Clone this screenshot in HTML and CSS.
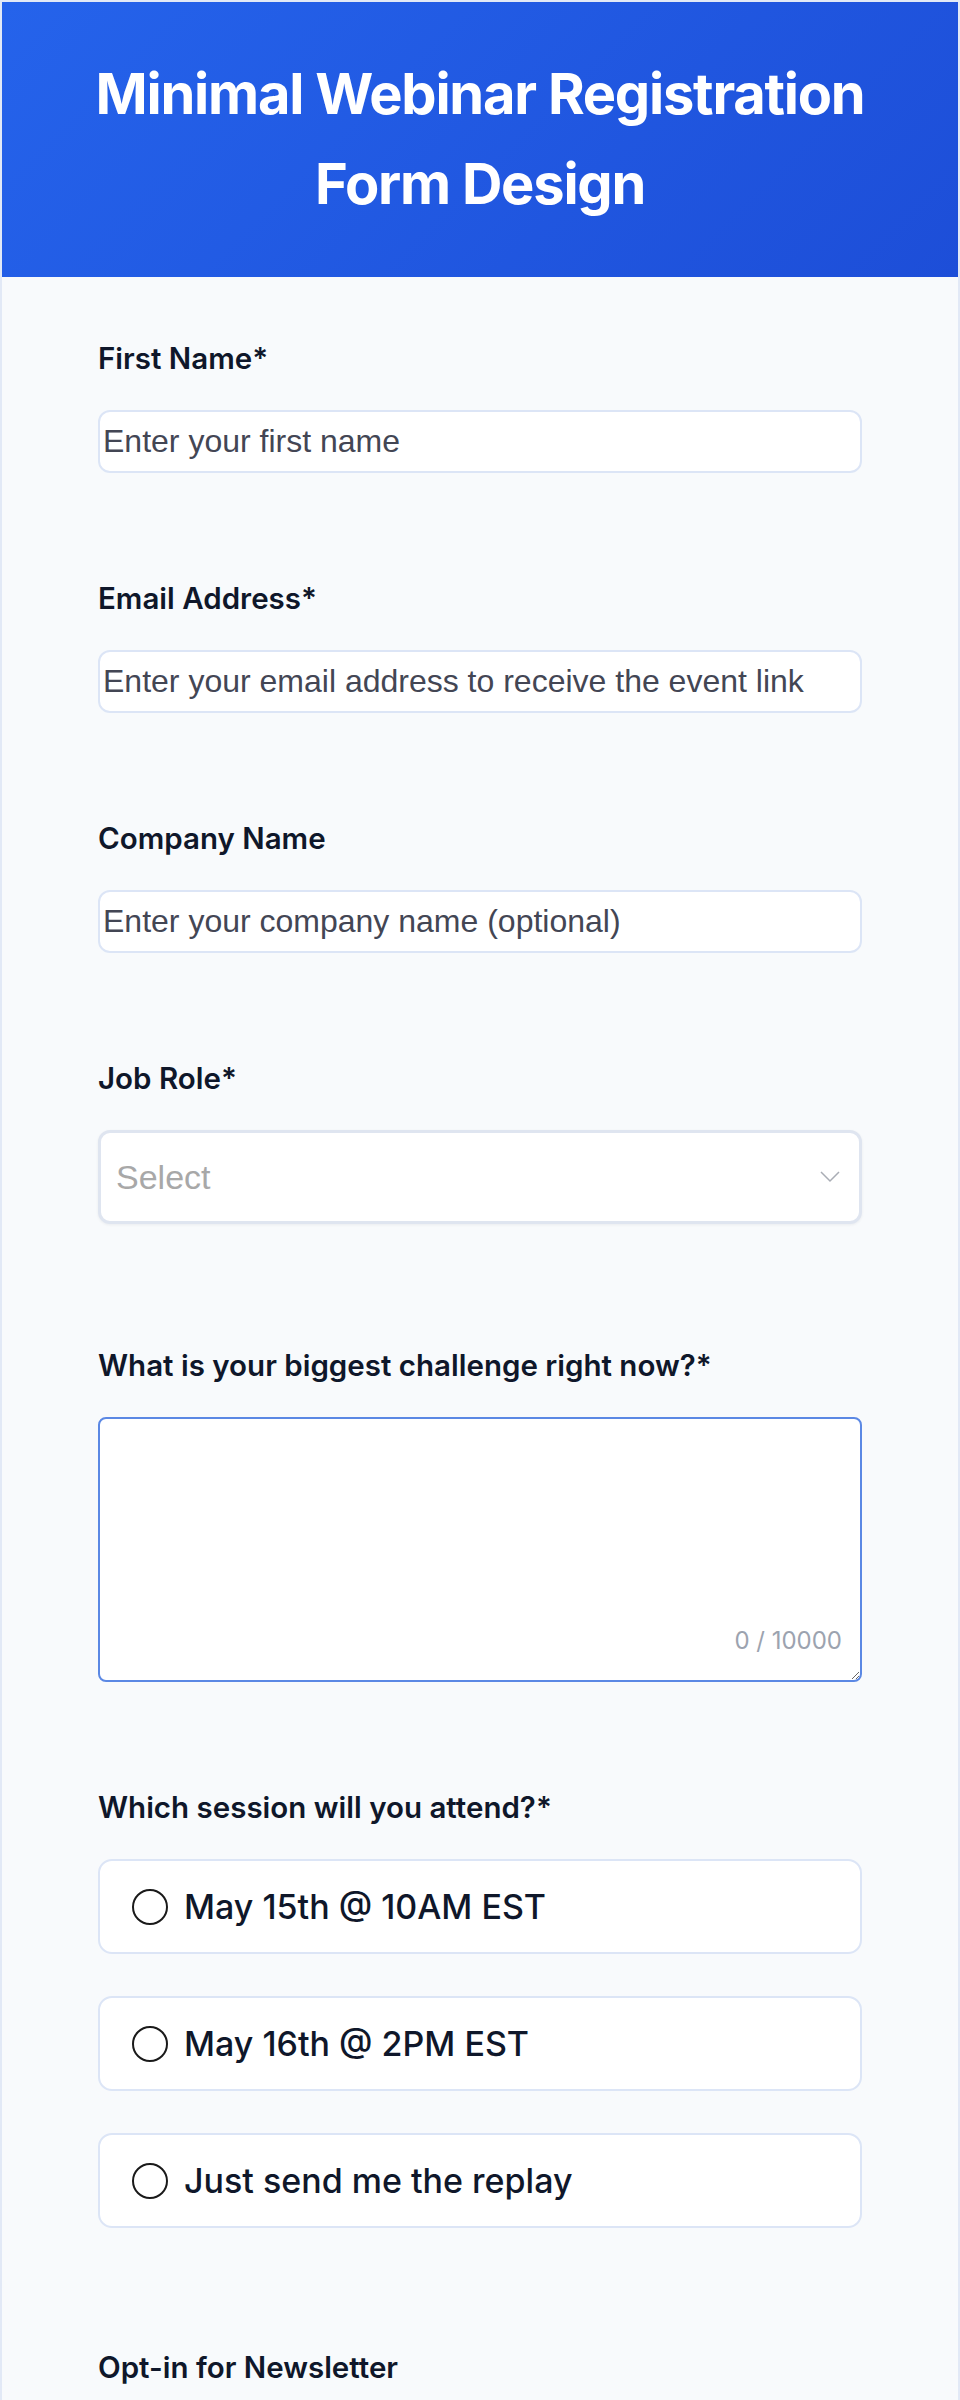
FILE: index.html
```html
<!DOCTYPE html>
<html lang="en">
<head>
    <meta charset="UTF-8">
    <meta name="viewport" content="width=device-width, initial-scale=1.0">
    <title>Minimal Webinar Registration Form Design</title>
    <link rel="stylesheet" href="styles.css">
</head>
<body>
    <div class="page">
        <header class="hero">
            <h1>Minimal Webinar Registration Form Design</h1>
        </header>

        <form class="reg-form" id="regForm">
            <div class="field">
                <label class="field-label" for="firstName">First Name*</label>
                <input type="text" id="firstName" placeholder="Enter your first name" required>
            </div>

            <div class="field">
                <label class="field-label" for="email">Email Address*</label>
                <input type="email" id="email" placeholder="Enter your email address to receive the event link" required>
            </div>

            <div class="field">
                <label class="field-label" for="company">Company Name</label>
                <input type="text" id="company" placeholder="Enter your company name (optional)">
            </div>

            <div class="field field-select">
                <label class="field-label" for="role">Job Role*</label>
                <div class="select-wrap">
                    <select id="role" required>
                        <option value="" selected disabled>Select</option>
                        <option value="marketing">Marketing</option>
                        <option value="sales">Sales</option>
                        <option value="engineering">Engineering</option>
                        <option value="other">Other</option>
                    </select>
                    <svg class="chevron" width="20" height="12" viewBox="0 0 20 12">
                        <path d="M1 1l9 9 9-9" fill="none" stroke="#a9adb5" stroke-width="1.5"/>
                    </svg>
                </div>
            </div>

            <div class="field">
                <label class="field-label" for="challenge">What is your biggest challenge right now?*</label>
                <div class="textarea-wrap">
                    <textarea id="challenge" maxlength="10000" required></textarea>
                    <span class="counter">0 / 10000</span>
                </div>
            </div>

            <div class="field field-radio">
                <span class="field-label">Which session will you attend?*</span>
                <label class="option"><input type="radio" name="session" value="may15"> May 15th @ 10AM EST</label>
                <label class="option"><input type="radio" name="session" value="may16"> May 16th @ 2PM EST</label>
                <label class="option"><input type="radio" name="session" value="replay"> Just send me the replay</label>
            </div>

            <div class="field">
                <span class="field-label">Opt-in for Newsletter</span>
            </div>
        </form>
    </div>
</body>
</html>
```

FILE: styles.css
```css
* {
    box-sizing: border-box;
}

body {
    margin: 0;
    background-color: #f8fafc;
    font-family: Inter, "Noto Sans", sans-serif;
    color: #0f172a;
}

.page {
    border: 2px solid #e2e9f6;
    border-bottom: none;
    min-height: 2400px;
}

.hero {
    background: linear-gradient(135deg, #2563eb, #1d4ed8);
    padding: 47px 40px 48px;
    text-align: center;
}

.hero h1 {
    margin: 0 auto;
    max-width: 780px;
    color: #fff;
    font-size: 56px;
    font-weight: 700;
    line-height: 90px;
    letter-spacing: -0.022em;
}

.reg-form {
    padding: 60px 96px 80px;
}

.field {
    margin-bottom: 104px;
}

.field-select {
    margin-bottom: 120px;
}

.field-radio {
    margin-bottom: 118px;
}

.field-label {
    display: block;
    font-size: 29.5px;
    font-weight: 600;
    line-height: 42px;
    margin-bottom: 31px;
}

input[type="text"],
input[type="email"] {
    display: block;
    width: 100%;
    height: 63px;
    padding: 0 3px;
    font-family: "Liberation Sans", Arial, sans-serif;
    font-size: 32px;
    color: #111;
    background-color: #fff;
    border: 2px solid #dce5f6;
    border-radius: 12px;
    outline: none;
}

input::placeholder {
    color: #434654;
}

.select-wrap {
    position: relative;
}

select {
    display: block;
    width: 100%;
    height: 94px;
    padding: 0 15px;
    font-family: "Liberation Sans", Arial, sans-serif;
    font-size: 34px;
    color: #a8a8a8;
    background-color: #fff;
    border: 3px solid #dfe5f0;
    border-radius: 12px;
    box-shadow: 0 1px 3px rgba(15, 23, 42, 0.06);
    appearance: none;
    -webkit-appearance: none;
    outline: none;
}

.chevron {
    position: absolute;
    right: 22px;
    top: 41px;
    pointer-events: none;
}

.textarea-wrap {
    position: relative;
}

textarea {
    display: block;
    width: 100%;
    height: 265px;
    padding: 16px;
    font-family: Inter, sans-serif;
    font-size: 24px;
    background-color: #fff;
    border: 2px solid #5b88e4;
    border-radius: 8px;
    resize: vertical;
    outline: none;
}

.counter {
    position: absolute;
    right: 20px;
    bottom: 27px;
    font-size: 24px;
    color: #9ca3af;
}

.option {
    display: flex;
    align-items: center;
    gap: 16px;
    height: 95px;
    padding: 0 32px;
    margin-bottom: 42px;
    font-size: 34px;
    font-weight: 500;
    background-color: #fff;
    border: 2px solid #dce5f6;
    border-radius: 14px;
    cursor: pointer;
}

.option:last-child {
    margin-bottom: 0;
}

.option input {
    appearance: none;
    -webkit-appearance: none;
    flex: none;
    width: 36px;
    height: 36px;
    margin: 0;
    border: 2px solid #1a1a1a;
    border-radius: 50%;
    background-color: #fff;
}
```
